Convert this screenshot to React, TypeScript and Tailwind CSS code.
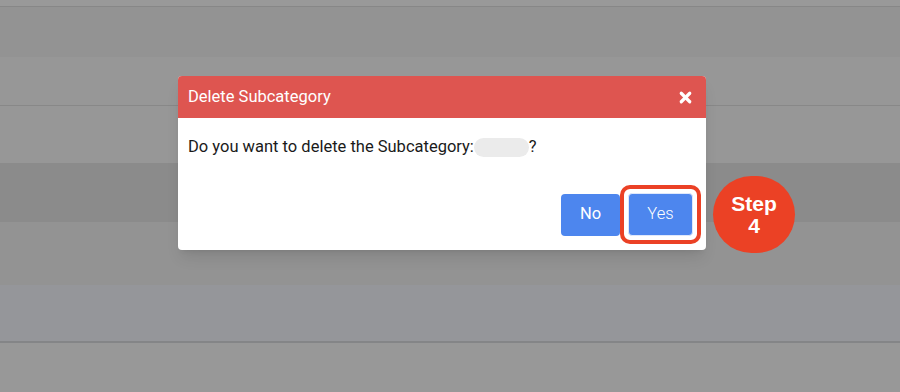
import { X } from "lucide-react";

const App = () => {
  return (
    <div className="relative w-[900px] h-[392px] overflow-hidden bg-[#989898] font-['Roboto',sans-serif]">
      {/* dimmed table rows behind the modal */}
      <div className="flex flex-col">
        <div className="h-[7px] bg-[#999999] border-b border-[#878787]" />
        <div className="h-[50px] bg-[#939393]" />
        <div className="h-[49px] bg-[#979797] border-b border-[#888888]" />
        <div className="h-[57px] bg-[#979797]" />
        <div className="h-[59px] bg-[#8b8b8b]" />
        <div className="h-[63px] bg-[#939393]" />
        <div className="h-[58px] bg-[#95969a] border-b-2 border-[#848587]" />
        <div className="h-[49px] bg-[#989898]" />
      </div>

      {/* modal */}
      <div className="absolute left-[178px] top-[76px] w-[528px] h-[174px] bg-white rounded-[4px] shadow-lg overflow-hidden flex flex-col">
        <div className="h-[42px] bg-[#de5550] flex items-center justify-between pl-[10px] pr-[12px]">
          <span className="text-white text-[16.5px]">Delete Subcategory</span>
          <X className="w-[17px] h-[17px] text-white" strokeWidth={4.5} />
        </div>
        <div className="flex-1 flex flex-col pl-[10px] pr-[5px]">
          <div className="flex items-center mt-[17px] h-[24px] text-[16.5px] text-[#1a1a1a]">
            <span>Do you want to delete the Subcategory:</span>
            <span className="inline-block w-[55px] h-[19px] rounded-full bg-[#ebebeb]" />
            <span>?</span>
          </div>
          <div className="flex justify-end items-center mt-[26px]">
            <button className="w-[59px] h-[42px] rounded-[4px] bg-[#4d86ee] text-white text-[16.5px]">
              No
            </button>
            <div className="p-[4px] rounded-[10px] border-[4px] border-[#eb4125]">
              <button className="w-[65px] h-[43px] rounded-[4px] bg-[#4d86ee] border border-[#dfe8fb] text-white text-[16.5px] font-light">
                Yes
              </button>
            </div>
          </div>
        </div>
      </div>

      {/* step badge */}
      <div className="absolute left-[713px] top-[176px] w-[82px] h-[77px] rounded-full bg-[#eb4125] flex flex-col items-center justify-center text-white font-bold text-[21px] leading-[22px] font-['Liberation_Sans',sans-serif]">
        <span>Step</span>
        <span>4</span>
      </div>
    </div>
  );
};

export default App;
